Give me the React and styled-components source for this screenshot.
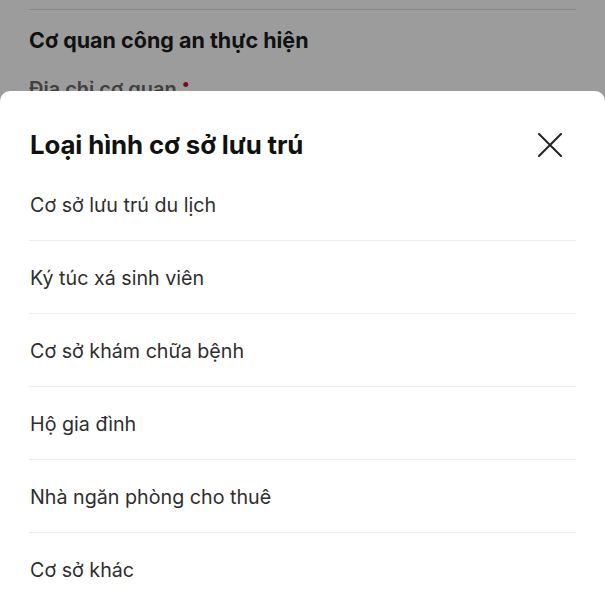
import styled, { createGlobalStyle } from "styled-components"

const Global = createGlobalStyle`
    html, body {
        margin: 0;
        padding: 0;
        height: 100%;
        overflow: hidden;
    }
    body {
        font-family: Inter, "Noto Sans", "Liberation Sans", sans-serif;
        background: #ffffff;
    }
`

const Page = styled.div`
    position: relative;
    width: 605px;
    height: 599px;
    overflow: hidden;
    background: #ffffff;
`

const Form = styled.div`
    padding: 0 29px;
`

const Rule = styled.div`
    height: 1px;
    background: #dcdcdc;
    margin-top: 9px;
`

const SectionTitle = styled.h3`
    margin: 0;
    padding-top: 15px;
    font-size: 21.5px;
    line-height: 30px;
    font-weight: 700;
    color: #1c1c1c;
`

const Label = styled.div`
    margin-top: 20px;
    font-size: 20px;
    line-height: 28px;
    font-weight: 600;
    color: #6b6b6b;

    span {
        position: relative;
        top: -7px;
        color: #c4123e;
        margin-left: 5px;
        font-size: 16px;
    }
`

const Overlay = styled.div`
    position: absolute;
    inset: 0;
    background: rgba(0, 0, 0, 0.39);
    display: flex;
    flex-direction: column;
    justify-content: flex-end;
`

const Sheet = styled.div`
    height: 508px;
    background: #ffffff;
    border-radius: 10px 10px 0 0;
    overflow: hidden;
`

const Header = styled.div`
    height: 77px;
    box-sizing: border-box;
    padding: 31px 42px 0 30px;
    display: flex;
    align-items: center;
    justify-content: space-between;
`

const Title = styled.h2`
    margin: 0;
    font-size: 25.8px;
    line-height: 32px;
    font-weight: 700;
    color: #111111;
    letter-spacing: -0.1px;
`

const Close = styled.button`
    border: 0;
    background: none;
    padding: 0;
    width: 26px;
    height: 26px;
    display: flex;
    align-items: center;
    justify-content: center;
    cursor: pointer;
`

const List = styled.ul`
    list-style: none;
    margin: 0;
    padding: 0 29px;
`

const Item = styled.li`
    height: 73px;
    box-sizing: border-box;
    display: flex;
    align-items: center;
    padding: 1px 0 0 1px;
    font-size: 19.7px;
    color: #2e2e2e;
    border-bottom: ${({ $last }) => ($last ? "none" : "1px solid #ececec")};
`

const options = [
    "Cơ sở lưu trú du lịch",
    "Ký túc xá sinh viên",
    "Cơ sở khám chữa bệnh",
    "Hộ gia đình",
    "Nhà ngăn phòng cho thuê",
    "Cơ sở khác",
]

export default function App() {
    return (
        <Page>
            <Global />
            <Form>
                <Rule />
                <SectionTitle>Cơ quan công an thực hiện</SectionTitle>
                <Label>Địa chỉ cơ quan<span>•</span></Label>
            </Form>
            <Overlay>
                <Sheet>
                    <Header>
                        <Title>Loại hình cơ sở lưu trú</Title>
                        <Close aria-label="Đóng">
                            <svg width="24" height="24" viewBox="0 0 24 24">
                                <path d="M1 1 L23 23 M23 1 L1 23" stroke="#222" strokeWidth="2" strokeLinecap="round" />
                            </svg>
                        </Close>
                    </Header>
                    <List>
                        {options.map((o, i) => (
                            <Item key={o} $last={i === options.length - 1}>{o}</Item>
                        ))}
                    </List>
                </Sheet>
            </Overlay>
        </Page>
    )
}
